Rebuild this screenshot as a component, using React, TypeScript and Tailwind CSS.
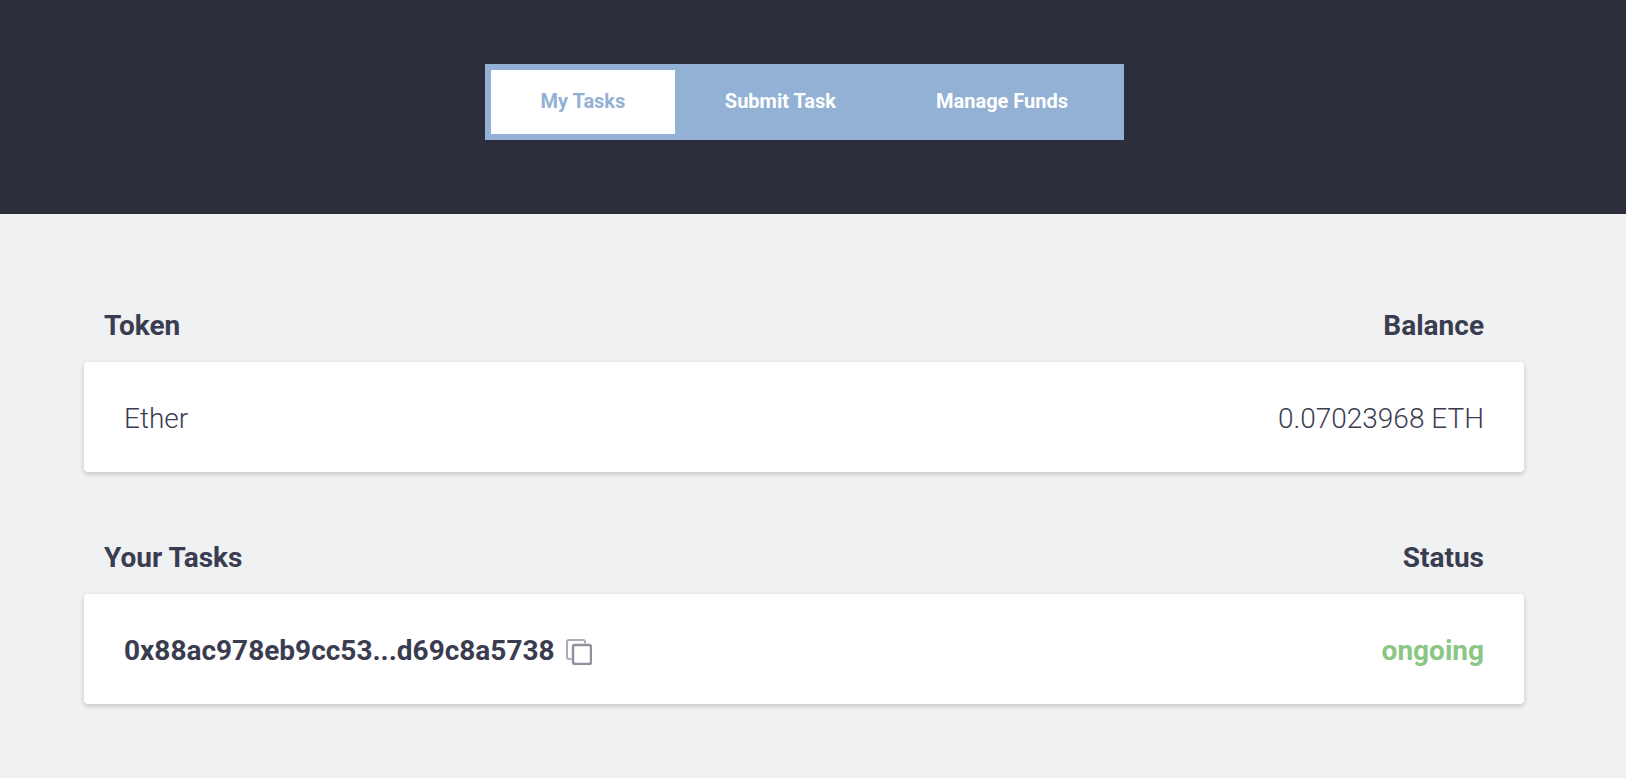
import { useState } from 'react'

const tabs = ['My Tasks', 'Submit Task', 'Manage Funds']

function CopyIcon() {
  return (
    <svg width="26" height="26" viewBox="0 0 26 26" fill="none" className="mt-[3px] text-[#8f929e]" stroke="currentColor">
      <path d="M5.5 20H3A2 2 0 0 1 1 18V3A2 2 0 0 1 3 1H17A2 2 0 0 1 19 3V4.5" strokeWidth="2" opacity="0.75" />
      <rect x="7" y="6" width="18" height="19" rx="2" strokeWidth="2.5" />
    </svg>
  )
}

function Section({ left, right, children }: { left: string; right: string; children: React.ReactNode }) {
  return (
    <section>
      <div className="flex justify-between pr-10 pl-5 pb-5 text-[28px] leading-[33px] font-bold text-[#3a3d50]">
        <span>{left}</span>
        <span>{right}</span>
      </div>
      <div className="flex h-[110px] items-center justify-between rounded-[4px] bg-white px-10 pt-[3px] shadow-[0_2px_5px_rgba(0,0,0,0.2)]">
        {children}
      </div>
    </section>
  )
}

export default function App() {
  const [active, setActive] = useState(0)

  return (
    <div className="min-h-[778px] bg-[#f0f1f2] font-['Roboto',sans-serif]">
      <header className="flex h-[214px] items-start justify-center bg-[#2c2e3b] pt-16 pr-[17px]">
        <nav className="flex bg-[#93b1d5] p-1.5">
          {tabs.map((t, i) => (
            <button
              key={t}
              onClick={() => setActive(i)}
              className={`h-16 pb-0.5 text-[20px] font-bold ${i === 0 ? 'px-[49.5px]' : 'px-[50px]'} ${i === active ? 'bg-white text-[#93b1d5]' : 'text-white'}`}
            >
              {t}
            </button>
          ))}
        </nav>
      </header>

      <main className="ml-[84px] flex w-[1440px] flex-col gap-[69px] pt-[95px]">
        <Section left="Token" right="Balance">
          <span className="text-[28px] font-light text-[#3a3d50]">Ether</span>
          <span className="text-[28px] font-light text-[#3a3d50]">0.07023968 ETH</span>
        </Section>

        <Section left="Your Tasks" right="Status">
          <span className="flex items-center gap-[11px] text-[28px] font-bold text-[#3a3d50]">
            0x88ac978eb9cc53...d69c8a5738
            <CopyIcon />
          </span>
          <span className="text-[28px] font-bold text-[#8bc684]">ongoing</span>
        </Section>
      </main>
    </div>
  )
}
